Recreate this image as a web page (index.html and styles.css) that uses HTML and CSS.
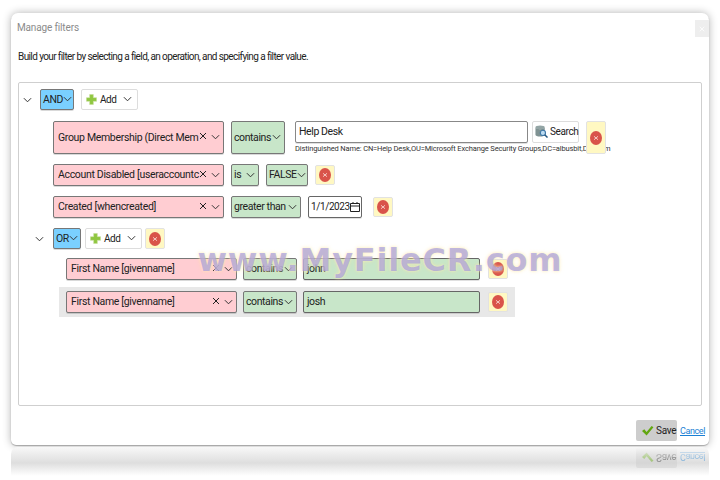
FILE: index.html
```html
<!DOCTYPE html>
<html lang="en">
<head>
<meta charset="utf-8">
<title>Manage filters</title>
<link rel="stylesheet" href="styles.css">
</head>
<body>
<svg class="defs" width="0" height="0" aria-hidden="true">
  <symbol id="chev" viewBox="0 0 10 6"><path d="M1 1l4 4 4-4" fill="none" stroke="currentColor" stroke-width="1.1"/></symbol>
  <symbol id="clear" viewBox="0 0 8 8"><path d="M1 1l6 6M7 1l-6 6" fill="none" stroke="currentColor" stroke-width="1"/></symbol>
  <symbol id="plus" viewBox="0 0 12 12"><path d="M4 0.5h4v3.500h3.500v4h-3.500v3.500h-4v-3.500h-3.500v-4h3.500z" fill="#8fc740" stroke="#c7dc9b" stroke-width=".6"/></symbol>
  <symbol id="del" viewBox="0 0 12 14"><ellipse cx="6" cy="7" rx="6" ry="7" fill="#d9534a"/><path d="M4 5.300l4 3.400M8 5.300l-4 3.400" stroke="#f6c9c3" stroke-width="1" fill="none"/></symbol>
  <symbol id="check" viewBox="0 0 14 12"><path d="M1 6.500l2.500-2 2.500 3L11.500 1 13.500 2.500 6 11.500z" fill="#62a60f"/></symbol>
</svg>
<div class="stage">
  <main class="window">
    <h1 class="title">Manage filters</h1>
    <button class="close" type="button"><svg class="i8"><use href="#clear"/></svg></button>
    <p class="intro">Build your filter by selecting a field, an operation, and specifying a filter value.</p>
    <section class="panel">
      <div class="row group-and">
        <svg class="toggle"><use href="#chev"/></svg>
        <div class="ctl blue w-and">AND<svg class="c"><use href="#chev"/></svg></div>
        <div class="ctl white w-add"><svg class="pl"><use href="#plus"/></svg><span class="addtxt">Add</span><svg class="c"><use href="#chev"/></svg></div>
      </div>
      <div class="row rule r1">
        <div class="ctl pink w-field tall"><span class="clip">Group Membership (Direct Mem</span><svg class="x"><use href="#clear"/></svg><svg class="c"><use href="#chev"/></svg></div>
        <div class="ctl green w-contains tall">contains<svg class="c"><use href="#chev"/></svg></div>
        <div class="valuewrap">
          <div class="search-line">
            <div class="input w-help">Help Desk</div>
            <div class="ctl white w-search">
              <svg class="db" viewBox="0 0 14 14"><ellipse cx="5.500" cy="2.500" rx="5" ry="2" fill="#93a5a5"/><path d="M.5 2.500v8c0 1 2 2 5 2s5-1 5-2v-8c0 1-2 2-5 2s-5-1-5-2z" fill="#7f9292"/><circle cx="8.500" cy="8.500" r="2.800" fill="#bcdcf2" stroke="#3f78a8" stroke-width="1.200"/><path d="M10.500 10.500l3 3" stroke="#25567f" stroke-width="1.600"/></svg>Search
            </div>
          </div>
          <div class="dn">Distinguished Name: CN=Help Desk,OU=Microsoft Exchange Security Groups,DC=albusbit,DC=com</div>
        </div>
        <div class="delbtn tall"><svg class="d"><use href="#del"/></svg></div>
      </div>
      <div class="row rule r2">
        <div class="ctl pink w-field"><span class="clip">Account Disabled [useraccountc</span><svg class="x"><use href="#clear"/></svg><svg class="c"><use href="#chev"/></svg></div>
        <div class="ctl green w-is"><span class="grow">is</span><svg class="c"><use href="#chev"/></svg></div>
        <div class="ctl green w-false">FALSE<svg class="c"><use href="#chev"/></svg></div>
        <div class="delbtn"><svg class="d"><use href="#del"/></svg></div>
      </div>
      <div class="row rule r3">
        <div class="ctl pink w-field"><span class="clip">Created [whencreated]</span><svg class="x"><use href="#clear"/></svg><svg class="c"><use href="#chev"/></svg></div>
        <div class="ctl green w-gt">greater than<svg class="c"><use href="#chev"/></svg></div>
        <div class="input w-date"><span class="grow">1/1/2023</span>
          <svg class="cal" viewBox="0 0 10 10"><path d="M.5 1.500h9v8h-9zM.5 4h9M3 0v2M7 0v2" fill="none" stroke="#222" stroke-width="1"/></svg>
        </div>
        <div class="delbtn d3"><svg class="d"><use href="#del"/></svg></div>
      </div>
      <div class="row group-or">
        <svg class="toggle"><use href="#chev"/></svg>
        <div class="ctl blue w-or">OR<svg class="c"><use href="#chev"/></svg></div>
        <div class="ctl white w-add"><svg class="pl"><use href="#plus"/></svg><span class="addtxt">Add</span><svg class="c"><use href="#chev"/></svg></div>
        <div class="delbtn"><svg class="d"><use href="#del"/></svg></div>
      </div>
      <div class="row sub r4">
        <div class="ctl pink w-field"><span class="clip">First Name [givenname]</span><svg class="x"><use href="#clear"/></svg><svg class="c"><use href="#chev"/></svg></div>
        <div class="ctl green w-contains">contains<svg class="c"><use href="#chev"/></svg></div>
        <div class="input green-in w-val">john</div>
        <div class="delbtn d4"><svg class="d"><use href="#del"/></svg></div>
      </div>
      <div class="row sub r5">
        <div class="ctl pink w-field"><span class="clip">First Name [givenname]</span><svg class="x"><use href="#clear"/></svg><svg class="c"><use href="#chev"/></svg></div>
        <div class="ctl green w-contains">contains<svg class="c"><use href="#chev"/></svg></div>
        <div class="input green-in w-val">josh</div>
        <div class="delbtn d4"><svg class="d"><use href="#del"/></svg></div>
      </div>
    </section>
    <footer class="actions">
      <button class="save" type="button"><svg class="chk"><use href="#check"/></svg>Save</button>
      <a class="cancel" href="#">Cancel</a>
    </footer>
    <div class="watermark">www.MyFileCR.com</div>
  </main>
  <div class="reflection">
    <div class="actions flipped">
      <button class="save ghost" type="button"><svg class="chk"><use href="#check"/></svg>Save</button>
      <a class="cancel" href="#">Cancel</a>
    </div>
  </div>
</div>
</body>
</html>
```
FILE: styles.css
```css
* { box-sizing: border-box; }
html, body { margin: 0; height: 100%; background: #fff; overflow: hidden; }
body { font-family: Roboto, "Liberation Sans", sans-serif; font-size: 11px; color: #222; }
.defs { position: absolute; }
.stage { padding: 13px 0 0 11px; width: 720px; height: 480px; display: flex; flex-direction: column; }
.window {
  position: relative; width: 698px; height: 432px; background: #fff;
  border-radius: 7px 7px 5px 5px; display: flex; flex-direction: column;
  box-shadow: 0 0 9px rgba(0,0,0,.3), 0 1px 1px rgba(0,0,0,.25);
  padding: 0 8px 0 7px;
}
.title { margin: 8px 0 0 -1px; font-size: 10px; line-height: 13px; font-weight: 400; color: #8b8b8b; letter-spacing: -.15px; }
.close {
  position: absolute; right: 0; top: 7px; width: 14px; height: 17px; border: 0; padding: 0;
  background: #eeeeee; color: #fff; display: flex; align-items: center; justify-content: center;
}
.i8 { width: 6px; height: 6px; }
.intro { margin: 16px 0 0; font-size: 10px; line-height: 14px; color: #222; letter-spacing: -.6px; }
.panel {
  margin-top: 18px; width: 684px; height: 324px; border: 1px solid #cfcfcf; border-radius: 2px;
  padding-top: 6px; display: flex; flex-direction: column;
}
.row { display: flex; align-items: flex-start; flex: none; }
.toggle { width: 9px; height: 6px; color: #333; align-self: center; flex: none; }
.group-and { padding-left: 4px; height: 21px; }
.group-and .toggle { margin-right: 8px; }
.group-and .ctl + .ctl { margin-left: 7px; }
.group-or { padding-left: 16px; height: 21px; margin-top: 10px; }
.group-or .toggle { margin-right: 9px; }
.group-or .w-or { margin-right: 4px; }
.group-or .delbtn { margin-left: 3px; }
.rule { padding-left: 34px; gap: 7px; }
.r1 { margin-top: 11px; height: 33px; }
.r2 { margin-top: 10px; height: 22px; }
.r3 { margin-top: 10px; height: 22px; }
.sub { gap: 6px; }
.r4 { margin-top: 9px; margin-left: 47px; height: 22px; }
.r5 { margin-top: 7px; margin-left: 40px; width: 456px; height: 30px; padding: 4px 7px; background: #e8e8e8; }
.ctl {
  display: flex; align-items: center; height: 22px; border: 1px solid #777; border-radius: 2px;
  padding: 0 3px 1px 2px; font-size: 10.5px; letter-spacing: -.4px; color: #222; flex: none; white-space: nowrap;
  box-shadow: 0 1px 0 rgba(0,0,0,.15);
}
.tall { height: 33px; }
.pink { background: #ffcdd2; padding-left: 4px; font-size: 10.5px; letter-spacing: -.33px; }
.green { background: #c8e6c9; }
.blue { background: #7ad0ff; height: 21px; justify-content: space-between; }
.white { background: #fff; border-color: #ddd; box-shadow: none; }
.w-field { width: 171px; }
.w-contains { width: 54px; justify-content: space-between; }
.w-is { width: 28px; }
.w-false { width: 42px; justify-content: space-between; }
.w-gt { width: 70px; justify-content: space-between; }
.w-and { width: 34px; }
.w-or { width: 28px; }
.w-add { width: 57px; height: 21px; padding-left: 4px; padding-right: 5px; }
.w-search { width: 47px; padding-left: 2px; padding-right: 0; height: 22px; font-size: 10px; }
.clip { flex: 1; min-width: 0; white-space: nowrap; }
.grow { flex: 1; }
.addtxt { flex: 1; margin-left: 3px; font-size: 10px; }
svg.c { width: 9px; height: 6px; flex: none; color: #333; }
svg.x { width: 8px; height: 8px; flex: none; margin: 0 4px 2px 0; color: #222; }
.pl { width: 11px; height: 11px; flex: none; }
.db { width: 13px; height: 13px; margin-right: 2px; flex: none; }
.valuewrap { margin-left: 3px; display: flex; flex-direction: column; width: 284px; flex: none; }
.search-line { display: flex; gap: 4px; }
.input {
  display: flex; align-items: center; height: 22px; background: #fff; border: 1px solid #888; border-radius: 2px;
  padding: 0 5px 1px 3px; font-size: 10.5px; letter-spacing: -.4px; flex: none; box-shadow: 0 1px 0 rgba(0,0,0,.12);
}
.w-help { width: 233px; }
.w-date { width: 54px; padding-left: 2px; padding-right: 3px; border-color: #666; font-size: 10px; }
.w-val { width: 177px; }
.green-in { background: #c8e6c9; border-color: #666; }
.cal { width: 10px; height: 10px; flex: none; }
.dn { margin-top: 1px; font-size: 7.5px; line-height: 10px; color: #333; white-space: nowrap; letter-spacing: -.14px; }
.delbtn {
  width: 20px; height: 20px; margin-top: 1px; background: #fff8c2; border: 1px solid #e2e2e2; border-radius: 2px;
  display: flex; align-items: center; justify-content: center; flex: none;
}
.delbtn.tall { height: 33px; margin-top: 0; }
.d3 { margin-left: 4px; }
.d4 { margin-left: 2px; }
.group-or .delbtn { margin-top: 0; height: 21px; }
.d { width: 12px; height: 14px; }
.actions { display: flex; justify-content: flex-end; align-items: center; gap: 3px; margin-top: 14px; }
.window .actions { margin-right: -4px; }
.save {
  display: flex; align-items: center; width: 41px; height: 21px; background: #cdcdcd; border: 0; border-radius: 2px;
  padding: 0 0 0 5px; font: inherit; font-size: 10px; letter-spacing: -.3px; color: #222;
}
.chk { width: 13px; height: 11px; margin-right: 2px; flex: none; }
.cancel { font-size: 9px; letter-spacing: -.4px; color: #1a7fd4; text-decoration: underline; }
.watermark {
  position: absolute; left: 184px; top: 229px; width: 370px; text-align: center;
  font-family: "DejaVu Sans", sans-serif; font-weight: 700; font-size: 32px; line-height: 36px; letter-spacing: .8px;
  color: rgba(130,122,232,.5); pointer-events: none; white-space: nowrap;
  text-shadow: 0 0 2px rgba(255,240,190,.7), 0 0 4px rgba(255,232,160,.6);
}
.reflection {
  position: relative; width: 698px; height: 29px; margin-top: 2px; flex: none;
  border-radius: 7px 7px 0 0;
  background: linear-gradient(#f8f8f8, #dedede 55%, #efefef 78%, #fff);
  filter: blur(.6px);
}
.flipped {
  position: absolute; right: 4px; top: 0; height: 21px; margin-top: 0; opacity: .45; transform: scaleY(-1);
  -webkit-mask-image: linear-gradient(#000 40%, transparent); mask-image: linear-gradient(#000 40%, transparent);
}
```
